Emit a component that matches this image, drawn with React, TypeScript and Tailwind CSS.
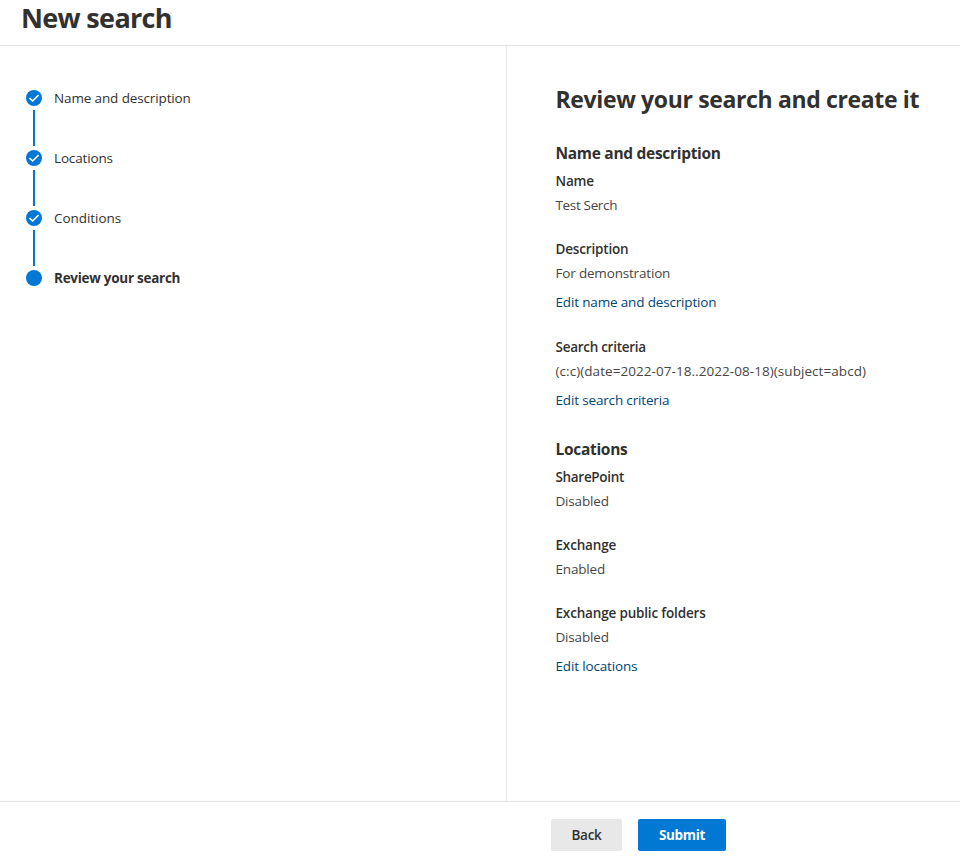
import React from 'react';

const steps = [
  { label: 'Name and description', done: true, className: 'tracking-[-0.13px]' },
  { label: 'Locations', done: true, className: 'tracking-[-0.15px]' },
  { label: 'Conditions', done: true, className: 'tracking-[-0.05px]' },
  { label: 'Review your search', done: false, className: 'font-bold tracking-[-0.27px]' },
];

function StepIcon({ done }: { done: boolean }) {
  return (
    <svg className="block h-4 w-4" viewBox="0 0 16 16" fill="none">
      <circle cx="8" cy="8" r="8" fill="#0078d4" />
      {done && <path d="M3.5 8 6.6 11 12.6 5.1" stroke="#fff" strokeWidth="1.6" />}
    </svg>
  );
}

function StepNav() {
  return (
    <nav className="w-[506px] shrink-0 pt-11 pl-[26px]">
      {steps.map((step, i) => (
        <div key={step.label} className="flex h-[60px] gap-3">
          <div className="flex w-4 flex-col items-center">
            <StepIcon done={step.done} />
            {i < steps.length - 1 && <div className="mt-1 h-9 w-0.5 bg-[#0078d4]" />}
          </div>
          <span className={`h-4 text-[13.5px] leading-4 whitespace-nowrap ${step.className}`}>{step.label}</span>
        </div>
      ))}
    </nav>
  );
}

interface FieldProps {
  label: string;
  value: string;
  labelClass?: string;
  valueClass?: string;
}

function Field({ label, value, labelClass = 'tracking-[-0.17px]', valueClass = 'tracking-[-0.18px]' }: FieldProps) {
  return (
    <div className="text-[13.5px] leading-6">
      <div className={`font-semibold ${labelClass}`}>{label}</div>
      <div className={`whitespace-nowrap text-[#484644] ${valueClass}`}>{value}</div>
    </div>
  );
}

function EditLink({ children }: { children: React.ReactNode }) {
  return (
    <a href="#" className="mt-[5px] block text-[13.5px] leading-6 tracking-[-0.16px] text-[#004578]">
      {children}
    </a>
  );
}

function SectionTitle({ children }: { children: React.ReactNode }) {
  return <h3 className="mb-1 text-[15.5px] leading-[23px] font-bold tracking-[-0.3px]">{children}</h3>;
}

function App() {
  return (
    <div className="flex h-[856px] w-[960px] flex-col overflow-hidden bg-white font-['Open_Sans',sans-serif] text-[#323130]">
      <header className="h-[46px] shrink-0 border-b border-[#e5e5e5] pl-[21px]">
        <h1 className="text-[27px] leading-9 font-bold tracking-[-0.67px]">New search</h1>
      </header>

      <div className="flex min-h-0 flex-1">
        <StepNav />
        <main className="flex-1 border-l border-[#e5e5e5] pt-[37px] pl-[48.5px]">
          <h2 className="text-[23px] leading-8 font-bold tracking-[-0.36px] whitespace-nowrap">
            Review your search and create it
          </h2>

          <section className="mt-[27px]">
            <SectionTitle>Name and description</SectionTitle>
            <div className="flex flex-col gap-5">
              <Field label="Name" value="Test Serch" valueClass="tracking-[-0.34px]" />
              <Field label="Description" value="For demonstration" />
            </div>
            <EditLink>Edit name and description</EditLink>
          </section>

          <section className="mt-[21px]">
            <Field
              label="Search criteria"
              value="(c:c)(date=2022-07-18..2022-08-18)(subject=abcd)"
              labelClass="tracking-[-0.28px]"
              valueClass="tracking-[0.06px]"
            />
            <EditLink>Edit search criteria</EditLink>
          </section>

          <section className="mt-[26px]">
            <SectionTitle>Locations</SectionTitle>
            <div className="flex flex-col gap-5">
              <Field label="SharePoint" value="Disabled" labelClass="tracking-[-0.32px]" />
              <Field label="Exchange" value="Enabled" />
              <Field label="Exchange public folders" value="Disabled" />
            </div>
            <EditLink>Edit locations</EditLink>
          </section>
        </main>
      </div>

      <footer className="flex h-[55px] shrink-0 gap-4 border-t border-[#e5e5e5] pt-[17px] pl-[551px]">
        <button className="h-8 w-[71px] rounded-xs bg-[#e8e8e8] text-[13.5px] font-semibold tracking-[-0.3px]">
          Back
        </button>
        <button className="h-8 w-[88px] rounded-xs bg-[#0078d4] text-[13.5px] font-bold tracking-[-0.35px] text-white">
          Submit
        </button>
      </footer>
    </div>
  );
}

export default App;
